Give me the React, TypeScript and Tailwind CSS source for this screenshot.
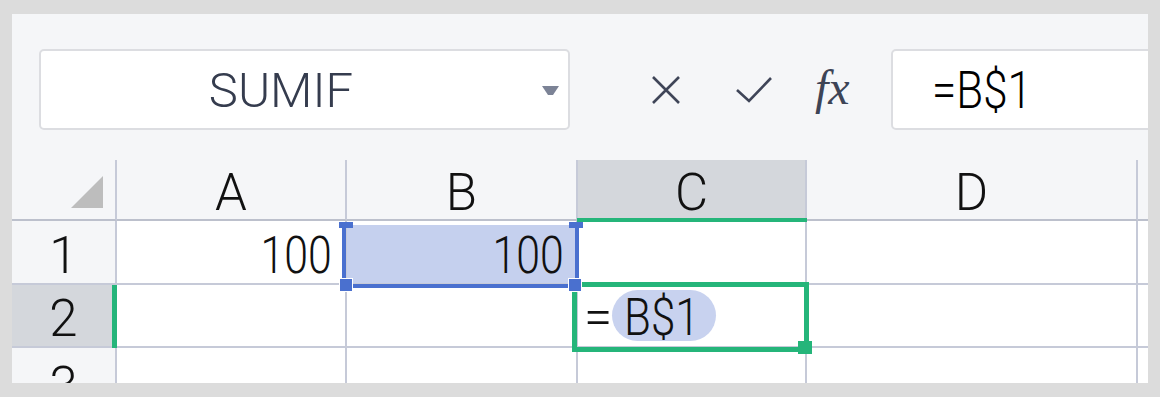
import React from 'react';

const font = { fontFamily: 'Roboto, "Liberation Sans", Arial, sans-serif' };

function CloseIcon() {
    return (
        <svg width="30" height="30" viewBox="0 0 30 30" className="shrink-0">
            <path d="M2 2 L28 28 M28 2 L2 28" stroke="#3f4558" strokeWidth="2.6" fill="none" />
        </svg>
    );
}

function CheckIcon() {
    return (
        <svg width="36" height="28" viewBox="0 0 36 28" className="shrink-0">
            <path d="M1 14 L13 25 L35 2" stroke="#3f4558" strokeWidth="2.6" fill="none" />
        </svg>
    );
}

export default function App() {
    const cols = ['A', 'B', 'C', 'D', ''];

    return (
        <div className="w-[1160px] h-[397px] bg-[#dcdcdc] pt-[14px] px-[12px] pb-[14px] font-light" style={font}>
            <div className="h-full bg-[#f5f6f8] overflow-hidden flex flex-col">
                {/* Formula bar */}
                <div className="flex items-start pl-[27px] pt-[35px] h-[146px] shrink-0">
                    <div className="relative w-[531px] h-[81px] shrink-0 bg-white border-2 border-[#dcdde1] rounded-[5px] flex items-center justify-center pr-[47px]">
                        <span className="text-[49px] leading-none text-[#353c4e] pt-[2px]">SUMIF</span>
                        <svg width="17" height="9" viewBox="0 0 17 9" className="absolute right-[9px] top-[35px]">
                            <path d="M0 0 H17 L11 9 H6 Z" fill="#7c8396" />
                        </svg>
                    </div>
                    <div className="flex items-center h-[81px] shrink-0">
                        <div className="ml-[81px]"><CloseIcon /></div>
                        <div className="ml-[55px]"><CheckIcon /></div>
                        <span className="ml-[43px] w-[45px] text-[48px] leading-none italic font-normal text-[#3d4456] pb-[4px]" style={{ fontFamily: '"Liberation Serif", "Times New Roman", serif' }}>fx</span>
                    </div>
                    <div className="ml-[31px] w-[400px] h-[81px] shrink-0 bg-white border-2 border-[#dcdde1] rounded-[5px] flex items-center pl-[39px]">
                        <span className="inline-block origin-left scale-x-[0.86] text-[51px] leading-none text-black pt-[2px]">=B$1</span>
                    </div>
                </div>

                {/* Grid */}
                <div className="relative flex-1">
                    <div className="grid grid-cols-[105px_230px_231px_229px_331px_200px] grid-rows-[61px_64px_63px_63px] text-[#111]">
                        {/* header row */}
                        <div className="border-r-2 border-b-2 border-r-[#c6cad8] border-b-[#bcc0cc] flex items-end justify-end pr-[12px] pb-[11px]">
                            <svg width="32" height="32" viewBox="0 0 32 32">
                                <path d="M32 0 V32 H0 Z" fill="#bdbdbd" />
                            </svg>
                        </div>
                        {cols.map((c, i) => (
                            <div
                                key={c + i}
                                className={`border-r-2 border-b-2 border-r-[#c6cad8] border-b-[#bcc0cc] flex items-center justify-center text-[51px] leading-none pt-[5px] ${c === 'C' ? 'bg-[#d4d7dc]' : ''}`}
                            >
                                {c}
                            </div>
                        ))}

                        {/* row 1 */}
                        <div className="border-r-2 border-b-2 border-[#c6cad8] flex items-center justify-center text-[51px] leading-none pt-[6px]">1</div>
                        <div className="bg-white border-r-2 border-b-2 border-[#c6cad8] flex items-center justify-end pr-[13px] pt-[6px]">
                            <span className="inline-block origin-right scale-x-[0.84] text-[51px] leading-none">100</span>
                        </div>
                        <div className="bg-white border-r-2 border-b-2 border-[#c6cad8] pt-[4px] flex">
                            <div className="flex-1 bg-[#c5d0ee] flex items-center justify-end pr-[12px] pt-[2px]">
                                <span className="inline-block origin-right scale-x-[0.84] text-[51px] leading-none">100</span>
                            </div>
                        </div>
                        <div className="bg-white border-r-2 border-b-2 border-[#c6cad8]" />
                        <div className="bg-white border-r-2 border-b-2 border-[#c6cad8]" />
                        <div className="bg-white border-r-2 border-b-2 border-[#c6cad8]" />

                        {/* row 2 */}
                        <div className="bg-[#d4d7dc] border-r-2 border-b-2 border-[#c6cad8] flex items-center justify-center text-[51px] leading-none pt-[6px]">2</div>
                        <div className="bg-white border-r-2 border-b-2 border-[#c6cad8]" />
                        <div className="bg-white border-r-2 border-b-2 border-[#c6cad8]" />
                        <div className="bg-white border-r-2 border-b-2 border-[#c6cad8] flex items-center pl-[6px] text-[51px] leading-none">
                            <span className="pt-[4px]">=</span>
                            <span className="h-[51px] w-[104px] rounded-full bg-[#c8d2ef] flex items-center pl-[12px] pt-[4px]">
                                <span className="inline-block origin-left scale-x-[0.86]">B$1</span>
                            </span>
                        </div>
                        <div className="bg-white border-r-2 border-b-2 border-[#c6cad8]" />
                        <div className="bg-white border-r-2 border-b-2 border-[#c6cad8]" />

                        {/* row 3 */}
                        <div className="border-r-2 border-[#c6cad8] flex items-start justify-center text-[51px] leading-none pt-[12px]">3</div>
                        <div className="bg-white border-r-2 border-[#c6cad8]" />
                        <div className="bg-white border-r-2 border-[#c6cad8]" />
                        <div className="bg-white border-r-2 border-[#c6cad8]" />
                        <div className="bg-white border-r-2 border-[#c6cad8]" />
                        <div className="bg-white border-r-2 border-[#c6cad8]" />
                    </div>

                    {/* active column / row markers */}
                    <div className="absolute left-[565px] top-[58px] w-[230px] h-[4px] bg-[#25b57a]" />
                    <div className="absolute left-[100px] top-[125px] w-[5px] h-[63px] bg-[#25b57a]" />

                    {/* B1 reference range */}
                    <div className="absolute left-[330px] top-[64px] w-[237px] h-[64px] border-l-4 border-r-4 border-b-4 border-[#4a70cf]" />

                    {/* active cell C2 */}
                    <div className="absolute left-[560px] top-[122px] w-[237px] h-[70px] border-[5px] border-[#25b57a]" />
                    <div className="absolute left-[786px] top-[181px] w-[14px] h-[13px] bg-[#25b57a]" />

                    {/* range handles */}
                    <div className="absolute left-[327px] top-[62px] w-[14px] h-[6px] bg-[#4a70cf]" />
                    <div className="absolute left-[557px] top-[62px] w-[14px] h-[6px] bg-[#4a70cf]" />
                    <div className="absolute left-[327px] top-[118px] w-[14px] h-[14px] bg-[#4a70cf] border border-white" />
                    <div className="absolute left-[556px] top-[118px] w-[14px] h-[14px] bg-[#4a70cf] border border-white" />
                </div>
            </div>
        </div>
    );
}
